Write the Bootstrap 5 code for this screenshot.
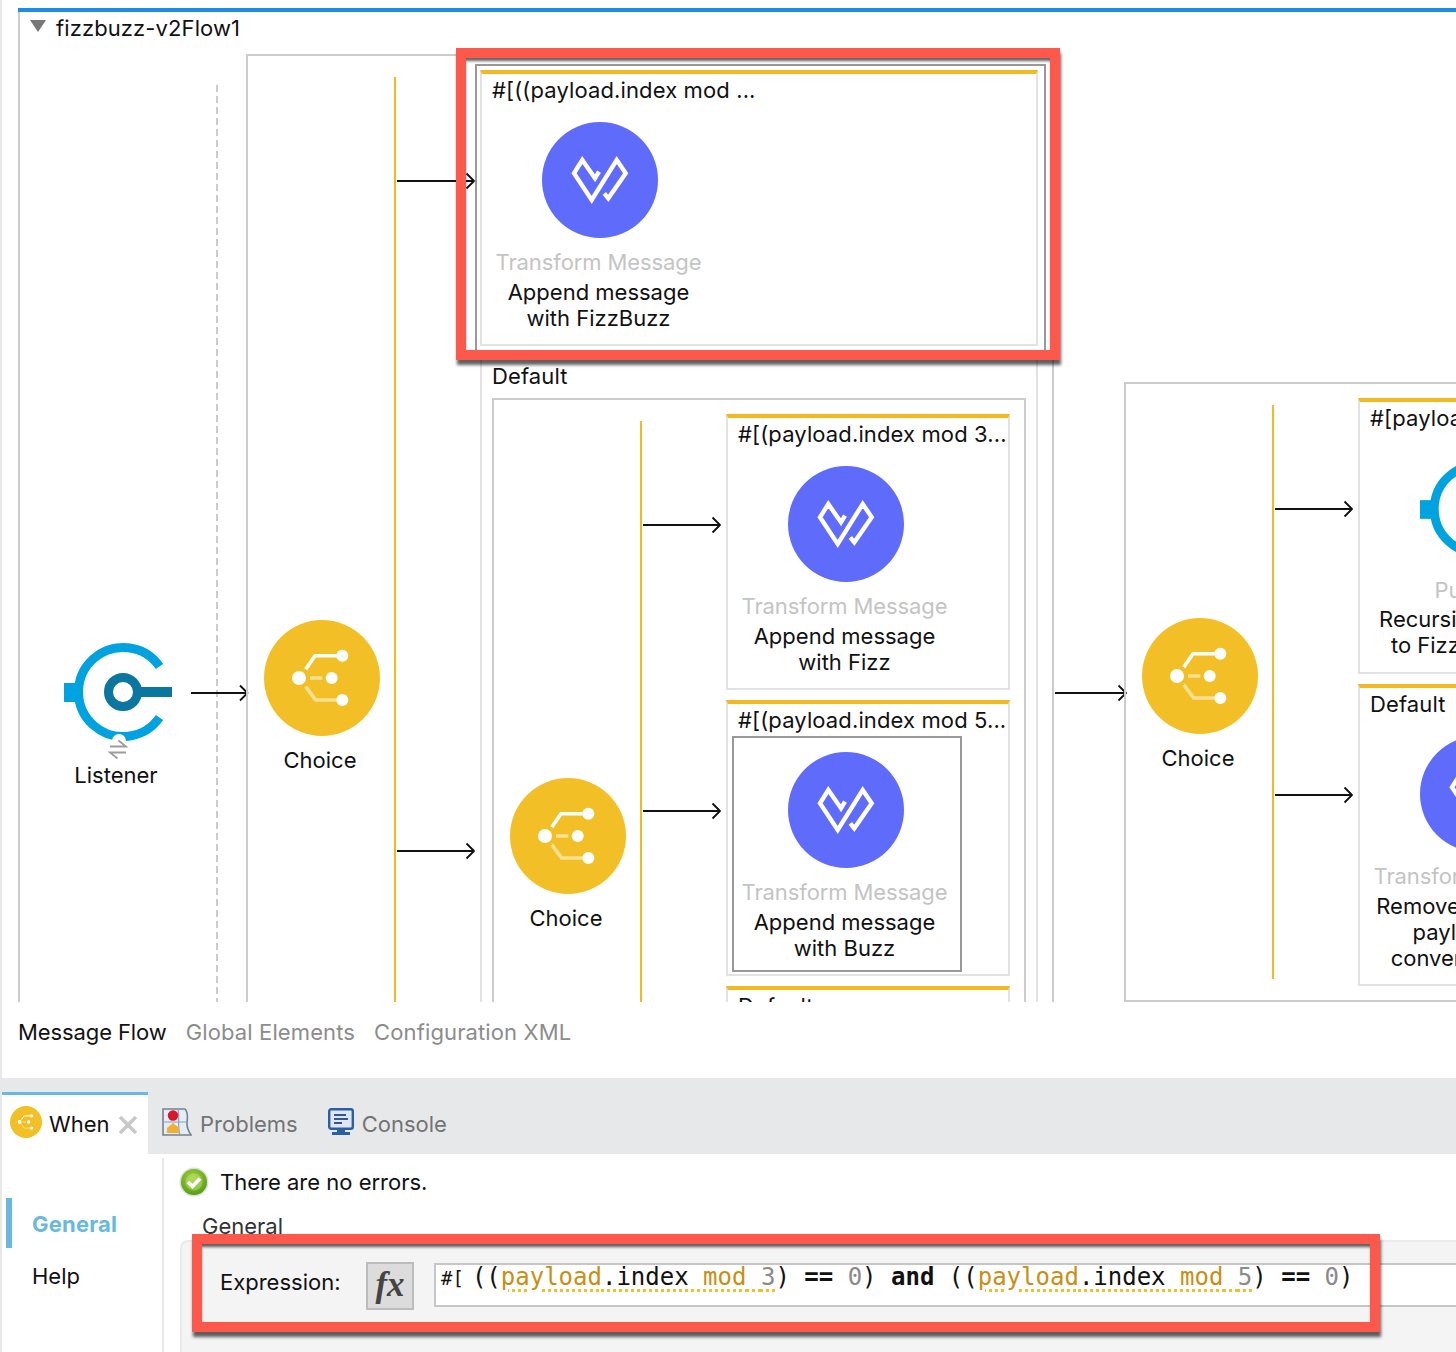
<!DOCTYPE html>
<html lang="en"><head><meta charset="utf-8"><title>fizzbuzz-v2Flow1</title>
<link rel="stylesheet" href="https://cdn.jsdelivr.net/npm/bootstrap@5.3.0/dist/css/bootstrap.min.css">
<style>
html,body{height:1352px;overflow:hidden}
body{font-family:Inter,"Liberation Sans",sans-serif;font-size:22px;line-height:26px;color:#111;background:linear-gradient(#e8e8e8,#e8e8e8) 0 0/2px 100% no-repeat #fff}
.flow-canvas{position:relative;height:1002px;overflow:hidden}
.canvas-lines{position:absolute;left:0;top:0;width:1456px;height:1002px}
.flow-title{position:absolute;left:56px;top:15px;letter-spacing:.1px}
.flow-tri{position:absolute;left:30px;top:20px;width:0;height:0;border-left:8px solid transparent;border-right:8px solid transparent;border-top:12px solid #777}
.scope-box,.when-box,.pick-box,.red-hl{position:absolute;box-sizing:border-box}
.scope-box{border:2px solid #ccc}
.s1{left:246px;top:54px;width:808px;height:1200px}
.s2{left:492px;top:398px;width:534px;height:900px}
.s3{left:1124px;top:382px;width:600px;height:620px}
.when-box{border:2px solid #e2e2e2;border-top:4px solid #f2b920;padding:3px 10px;white-space:nowrap;letter-spacing:.12px}
.w1{left:480px;top:70px;width:558px;height:276px}
.w0{left:480px;top:356px;width:558px;height:900px}
.w2{left:726px;top:414px;width:284px;height:276px}
.w3{left:726px;top:700px;width:284px;height:276px}
.w4{left:726px;top:986px;width:284px;height:100px}
.w5{left:1358px;top:398px;width:400px;height:276px}
.w6{left:1358px;top:684px;width:400px;height:302px}
.pick-box{border:2px solid #999}
.p0{left:475px;top:64px;width:571px;height:290px}
.p1{left:732px;top:736px;width:230px;height:236px}
.op-node{position:absolute;width:228px;display:flex;flex-direction:column;align-items:center;text-align:center;line-height:26px}
.op-node svg{width:116px;height:116px;flex:none}
.n1{left:486px;top:122px}.n2{left:732px;top:466px}.n3{left:732px;top:752px}.n4{left:1364px;top:736px}.n5{left:1364px;top:451px}
.op-type{color:#c4c4c4;margin-top:11px;white-space:nowrap;margin-right:3px;letter-spacing:-.1px}
.op-name{margin-top:5px;white-space:nowrap;margin-right:3px;line-height:25.5px}
.op-shift{margin-right:12px}
.n5 .op-type{margin-top:10px}
.n5 .op-name{margin-top:4px}
.n4 .op-name{margin-top:4px;line-height:26px}
.ch-node{position:absolute;width:116px;display:flex;flex-direction:column;align-items:center}
.ch-node svg{width:116px;height:116px;flex:none}
.ch-node span{margin-top:11px;margin-right:4px}
.c1{left:264px;top:620px}.c2{left:510px;top:778px}.c3{left:1142px;top:618px}
.src-node{position:absolute;left:64px;top:634px;width:118px}
.src-node svg{display:block;width:118px;height:116px}
.src-label{position:absolute;left:16px;top:762px;width:200px;text-align:center}
.red-hl{border:10px solid #fd584c;box-shadow:1px 5px 3px rgba(0,0,0,.62),inset 0 4px 3px -1px rgba(0,0,0,.62)}
.r1{left:456px;top:48px;width:604px;height:312px}
.r2{left:192px;top:80px;width:1188px;height:98px}
.view-tabs{height:76px;padding:17px 0 0 18px;gap:19px}
.view-tab{color:#8c8c8c;letter-spacing:.12px}
.view-tab-on{color:#111;letter-spacing:-.1px}
.tab-bar{height:76px;background:#e7e8ea;padding-left:2px}
.tab-item{height:62px;margin-top:14px;color:#737373;padding-top:2px}
.tab-on{width:146px;background:#fff;border-top:3px solid #69b8e0;color:#111;padding:0 0 2px 8px}
.tab-on .tab-ball{width:32px;height:32px;margin-right:7px;margin-top:-3px;flex:none}
.tab-close{width:20px;height:20px;margin-left:8px;margin-top:2px;flex:none}
.tab-prob{margin-left:14px}
.tab-prob svg{width:30px;height:30px;margin-right:8px;margin-top:-5px;flex:none}
.tab-cons{margin-left:30px}
.tab-cons svg{width:26px;height:28px;margin-right:8px;margin-top:-5px;flex:none}
.lower{height:198px}
.side-nav{width:164px;height:194px;margin-top:4px;border-right:2px solid #e8e8e8;flex:none;padding-top:40px}
.side-item{height:50px;margin-left:6px;padding:2px 0 0 20px;border-left:6px solid transparent;display:flex;align-items:center;margin-bottom:2px}
.side-on{border-left-color:#69b8e0;color:#69b8e0;font-weight:700;letter-spacing:.2px}
.main-pane{flex:1;min-width:0;padding-left:16px}
.status-row{height:56px}
.status-row svg{width:30px;height:30px;margin:-1px 11px 0 -1px;flex:none}
.group-title{padding-left:22px;height:27px;color:#333;margin-top:3px}
.expr-panel{height:120px;background:#f4f4f4;border:2px solid #ebebeb;border-right:0;border-bottom:0;border-top-left-radius:8px;padding:20px 0 0 38px}
.expr-label{width:146px;margin-top:7px;flex:none}
.fx-btn{width:48px;height:48px;background:#dcdcdc;border:2px solid #bcbcbc;font-family:"Liberation Serif",serif;font-style:italic;font-weight:700;font-size:35px;line-height:42px;color:#444;flex:none;margin-right:20px;text-align:center}
.expr-input{flex:1;height:44px;background:#fff;border:2px solid #c6c6c6;border-right:0;padding:0 0 0 5px;font-family:"DejaVu Sans Mono","Liberation Mono",monospace;font-size:24px;line-height:24px;white-space:nowrap;overflow:hidden;margin-top:1px;color:#111}
.cd-open{font-size:19px;margin-right:8px}
.cd-v{color:#c98e14}.cd-n{color:#8a8a8a}
.cd-err{text-decoration:underline dotted #f2c026 3px;text-underline-offset:4px}
</style>
<script src="https://cdn.jsdelivr.net/npm/bootstrap@5.3.0/dist/js/bootstrap.bundle.min.js"></script>
</head><body>
<svg width="0" height="0" class="position-absolute">
<defs>
<symbol id="ic-transform" viewBox="-58 -58 116 116"><circle r="58" fill="#5f6bfb"/><path d="M-1-8.3-5-1.7-17.700-20-26-6.700-8.300 20 16.700-20 25.700-6.700 8.300 18.300 4.300 13.300" fill="none" stroke="#fff" stroke-width="4.400"/></symbol>
<symbol id="ic-choice" viewBox="-58 -58 116 116"><circle r="58" fill="#f2c026"/><g fill="none" stroke-width="3.600" stroke="#fff"><path d="M-16.300-8.700-7-22.300H14.700"/><path d="M-16.300 8.700-6.300 22H14.700M-12 0H.3" opacity=".5"/></g><g fill="#fff"><circle cx="-23" cy="0" r="7"/><circle cx="20.300" cy="-22.300" r="6"/><circle cx="9.700" cy="0" r="6"/><circle cx="20.300" cy="22" r="6"/></g></symbol>
<symbol id="ic-flowref" viewBox="-59 -58 118 116"><path d="M36.500-25.500A44.500 44.500 0 1 0 36.500 25.500" fill="none" stroke="#00a3e0" stroke-width="9"/><rect x="-59" y="-9" width="13" height="19" fill="#00a3e0"/><circle r="14.500" fill="none" stroke="#0b76a0" stroke-width="9"/><rect x="14" y="-5" width="35" height="10" fill="#0b76a0"/></symbol>
<radialGradient id="gr-ok" cx=".45" cy=".35" r=".7"><stop offset="0" stop-color="#a8d63a"/><stop offset="1" stop-color="#4f9a12"/></radialGradient>
</defs></svg>

<div class="flow-canvas">
<svg class="canvas-lines" viewBox="0 0 1456 1002" fill="none" aria-hidden="true">
<path d="M18 10H1456" stroke="#1a8ee6" stroke-width="4"/>
<path d="M19 12V1002" stroke="#ccc" stroke-width="2"/>
<path d="M217 85V1002" stroke="#ccc" stroke-width="2" stroke-dasharray="7 4"/>
<path d="M395 77V1002M641 421V1002M1273 405V979" stroke="#f2b920" stroke-width="2"/>
<g stroke="#111" stroke-width="1.800" stroke-linejoin="round">
<path d="M191 693H247M240 685.500 247.500 693 240 700.500"/>
<path d="M397 181H474M466.500 173.500 474 181 466.500 188.500"/>
<path d="M397 851H474M466.500 843.500 474 851 466.500 858.500"/>
<path d="M643 525H720M712.500 517.500 720 525 712.500 532.500"/>
<path d="M643 811H720M712.500 803.500 720 811 712.500 818.500"/>
<path d="M1055 693H1126M1118.500 685.500 1126 693 1118.500 700.500"/>
<path d="M1275 509H1352M1344.500 501.500 1352 509 1344.500 516.500"/>
<path d="M1275 795H1352M1344.500 787.500 1352 795 1344.500 802.500"/>
</g>
</svg>
<div class="flow-tri"></div>
<div class="flow-title">fizzbuzz-v2Flow1</div>

<div class="src-node"><svg><use href="#ic-flowref"/></svg></div>
<svg class="canvas-lines" viewBox="0 0 1456 1002" fill="none" aria-hidden="true">
<circle cx="119" cy="741" r="7" fill="#fff"/>
<path d="M110 746.500H126L118.500 740.500M126 752.500H110L117.500 758.500" stroke="#9c9c9c" stroke-width="1.800"/>
</svg>
<div class="src-label">Listener</div>

<div class="scope-box s1"></div>
<div class="ch-node c1"><svg><use href="#ic-choice"/></svg><span>Choice</span></div>

<div class="when-box w0">Default</div>
<div class="scope-box s2"></div>
<div class="ch-node c2"><svg><use href="#ic-choice"/></svg><span>Choice</span></div>

<div class="when-box w1">#[((payload.index mod ...</div>
<div class="op-node n1"><svg><use href="#ic-transform"/></svg><div class="op-type">Transform Message</div><div class="op-name">Append message<br>with FizzBuzz</div></div>

<div class="when-box w2">#[(payload.index mod 3...</div>
<div class="op-node n2"><svg><use href="#ic-transform"/></svg><div class="op-type">Transform Message</div><div class="op-name">Append message<br>with Fizz</div></div>

<div class="when-box w3">#[(payload.index mod 5...</div>
<div class="pick-box p1"></div>
<div class="op-node n3"><svg><use href="#ic-transform"/></svg><div class="op-type">Transform Message</div><div class="op-name">Append message<br>with Buzz</div></div>

<div class="when-box w4">Default</div>

<div class="scope-box s3"></div>
<div class="ch-node c3"><svg><use href="#ic-choice"/></svg><span>Choice</span></div>

<div class="when-box w5">#[payload.index ...</div>
<div class="op-node n5"><svg><use href="#ic-flowref"/></svg><div class="op-type op-shift">Publish</div><div class="op-name">Recursive callback<br>to FizzBuzz flow</div></div>

<div class="when-box w6">Default</div>
<div class="op-node n4"><svg><use href="#ic-transform"/></svg><div class="op-type">Transform Message</div><div class="op-name">Remove index from<br>payload and<br>convert to JSON</div></div>

<div class="pick-box p0"></div>
<div class="red-hl r1"></div>
</div>

<div class="view-tabs d-flex">
<div class="view-tab view-tab-on">Message Flow</div>
<div class="view-tab">Global Elements</div>
<div class="view-tab">Configuration XML</div>
</div>

<div class="tab-bar d-flex">
<div class="tab-item tab-on d-flex align-items-center">
<svg class="tab-ball"><use href="#ic-choice"/></svg>When
<svg class="tab-close" viewBox="0 0 20 20"><path d="M2 2 18 18M18 2 2 18" stroke="#c8c8c8" stroke-width="3.600"/></svg>
</div>
<div class="tab-item tab-prob d-flex align-items-center">
<svg viewBox="0 0 30 30">
<path d="M1 2H23C27 6 25 12 25 17C25 21 27 25 29 28H1Z" fill="#e4edf6" stroke="#76808e" stroke-width="1.600"/>
<path d="M16 2C18 10 15 20 18 28M1 15H24" stroke="#8aa2bc" stroke-width="1.200" fill="none"/>
<circle cx="11" cy="8.500" r="5.200" fill="#d8182a"/>
<path d="M5 26V21L11 16 17 21V26Z" fill="#f2b030"/>
</svg>Problems
</div>
<div class="tab-item tab-cons d-flex align-items-center">
<svg viewBox="0 0 26 28">
<rect x="1.200" y="1.200" width="23.600" height="19.600" rx="2" fill="#dfe7f5" stroke="#2c5ea6" stroke-width="2.400"/>
<path d="M6 7H18M6 11H20M6 15H14" stroke="#34588e" stroke-width="1.800"/>
<path d="M9 21H17V24H22V27H4V24H9Z" fill="#2c5ea6"/>
</svg>Console
</div>
</div>

<div class="lower d-flex position-relative">
<div class="side-nav">
<div class="side-item side-on">General</div>
<div class="side-item">Help</div>
</div>
<div class="main-pane">
<div class="status-row d-flex align-items-center">
<svg viewBox="0 0 30 30"><circle cx="15" cy="15" r="14.500" fill="#dcdcdc"/><circle cx="15" cy="15" r="13" fill="url(#gr-ok)"/><circle cx="15" cy="15" r="8.500" fill="#c4e08c" opacity=".45"/><path d="M9 15 13.500 19.500 21 11.500" fill="none" stroke="#fff" stroke-width="3.600"/></svg>
There are no errors.
</div>
<div class="group-title">General</div>
<div class="expr-panel d-flex">
<div class="expr-label">Expression:</div>
<div class="fx-btn">fx</div>
<div class="expr-input"><span class="cd-open">#[</span>((<span class="cd-err"><span class="cd-v">payload</span>.index <span class="cd-v">mod</span> <span class="cd-n">3</span></span>) <b>==</b> <span class="cd-n">0</span>) <b>and</b> ((<span class="cd-err"><span class="cd-v">payload</span>.index <span class="cd-v">mod</span> <span class="cd-n">5</span></span>) <b>==</b> <span class="cd-n">0</span>)</div>
</div>
</div>
<div class="red-hl r2"></div>
</div>
</body></html>
